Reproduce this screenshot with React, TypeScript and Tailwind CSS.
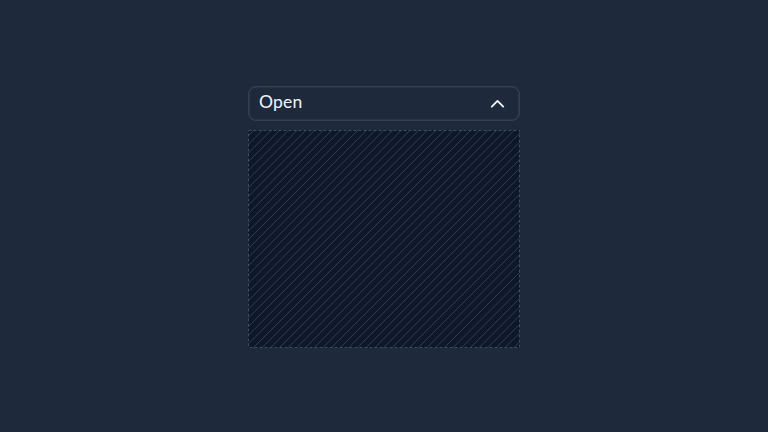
const WIDTH = 272;
const HEIGHT = 218;
const STEP = 8.68;

// Parallel 45-degree strokes covering the whole placeholder.
const hatch = Array.from({ length: 57 }, (_, i) => {
  const start = 6 + i * STEP;
  return `M${start.toFixed(2)} 0L${(start - HEIGHT).toFixed(2)} ${HEIGHT}`;
}).join("");

function Placeholder() {
  return (
    <svg className="mt-[9px] block overflow-hidden" width={WIDTH} height={HEIGHT} viewBox="0 0 272 218">
      <rect width={WIDTH} height={HEIGHT} fill="#0f172a" />
      <path d={hatch} stroke="#37465b" strokeWidth="0.85" />
      <rect x=".5" y=".5" width="271" height="217" fill="none" stroke="#3d4c62" strokeDasharray="3 2" />
    </svg>
  );
}

export default function App() {
  return (
    <main className="flex h-screen w-screen flex-col items-center bg-[#1e2a3c] pt-[86px]">
      <button
        type="button"
        className="flex h-[35px] w-[272px] items-center justify-between rounded-lg border border-[#334157] pl-[10px] pr-[14px] font-['Lato',sans-serif] text-[17.5px] leading-none tracking-[0.2px] text-slate-100 shadow-[inset_0_0_0_0.5px_#334157]"
      >
        <span className="-mt-[3px]">Open</span>
        <svg width="15" height="10" viewBox="0 0 15 10" fill="none" stroke="currentColor" strokeWidth="1.9" strokeLinecap="round" strokeLinejoin="round">
          <path d="M1.8 7.6 7.5 1.9 13.2 7.6" />
        </svg>
      </button>
      <Placeholder />
    </main>
  );
}
